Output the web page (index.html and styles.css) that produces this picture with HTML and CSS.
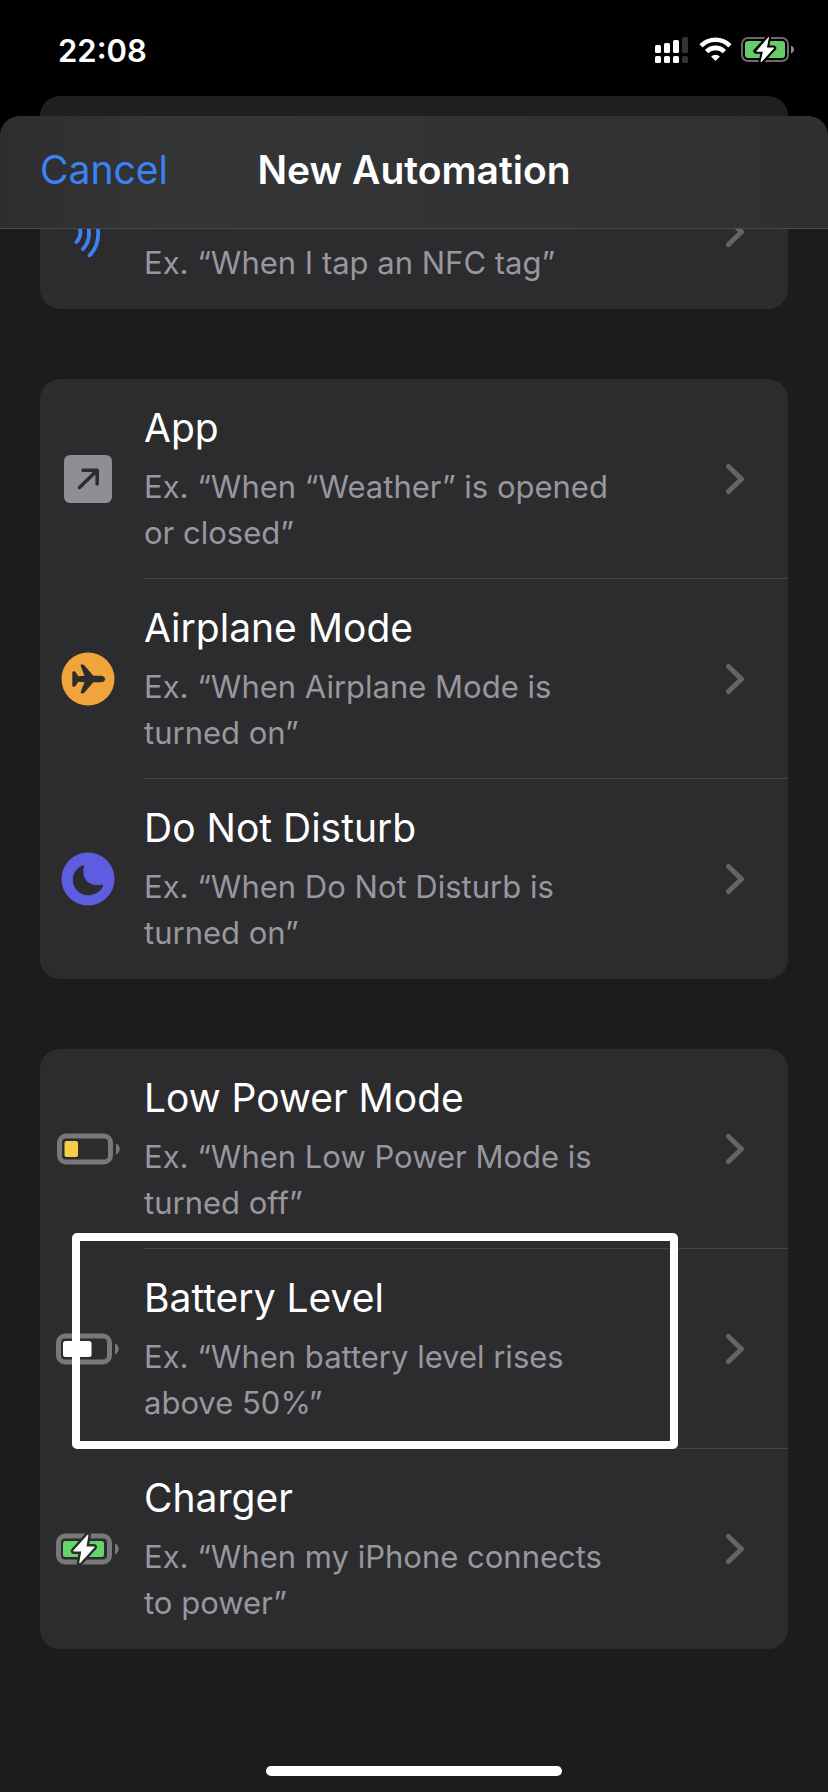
FILE: index.html
```html
<!DOCTYPE html>
<html lang="en">
<head>
  <meta charset="UTF-8" />
  <meta name="viewport" content="width=device-width, initial-scale=1.0"/>
  <title>New Automation</title>
  <link rel="stylesheet" href="styles.css">
</head>
<body>

  <div class="status-bar">
    <span class="time">22:08</span>
    <div class="status-icons">
      <svg width="33" height="28" viewBox="0 0 33 28" fill="#fff">
        <rect x="0" y="9" width="6" height="8" rx="1.5"/>
        <rect x="9" y="7" width="6" height="10" rx="1.5"/>
        <rect x="18" y="4" width="6" height="13" rx="1.5"/>
        <rect x="27" y="1" width="6" height="16" rx="1.5" fill="#333"/>
        <rect x="0" y="20" width="6" height="7" rx="1.5"/>
        <rect x="9" y="20" width="6" height="7" rx="1.5"/>
        <rect x="18" y="20" width="6" height="7" rx="1.5"/>
        <rect x="27" y="20" width="6" height="7" rx="1.5" fill="#333"/>
      </svg>
      <svg width="35" height="28" viewBox="0 0 35 28" fill="none" stroke="#fff" stroke-width="4.6">
        <path d="M4 9.8a20.5 20.5 0 0 1 29 0"/>
        <path d="M9.6 15.6a12.6 12.6 0 0 1 17.8 0"/>
        <path d="M18.5 25l-4.4-4.4a6.3 6.3 0 0 1 8.8 0z" fill="#fff" stroke="none"/>
      </svg>
      <svg width="53" height="28" viewBox="0 0 53 28">
        <rect x="1" y="2" width="46" height="23" rx="6" fill="none" stroke="#6b6b6d" stroke-width="2"/>
        <path d="M50 9.5c4 1.500 4 6.500 0 8z" fill="#8a8a8c"/>
        <rect x="4" y="5" width="40" height="17" rx="3" fill="#67ce67"/>
        <path d="M27.500 1.500L14.800 15.200h7.700L20 26 32.800 12h-7.500z" fill="#fff" stroke="#000" stroke-width="5" stroke-linejoin="round"/>
        <path d="M27.500 1.500L15.800 15.200h6.700L20 26 32.800 12h-7.500z" fill="#fff" stroke="#fff" stroke-width="1" stroke-linejoin="round"/>
      </svg>
    </div>
  </div>

  <div class="back-card"></div>

  <div class="sheet">
    <header class="nav">
      <button type="button" class="cancel">Cancel</button>
      <h1>New Automation</h1>
    </header>

    <main class="content">
      <ul class="group group-scrolled">
        <li>
          <a class="row" href="#">
            <span class="icon">
              <svg width="54" height="30" viewBox="0 0 54 30" fill="none" stroke="#3b82f7" stroke-width="3.8" stroke-linecap="round">
                <path d="M17.500 -4C20.500 2 20 8 15.500 13"/>
                <path d="M26 -6C29.500 4 28.500 13 22 20"/>
                <path d="M35.500 -8C39 6 37 18 28.500 26.500"/>
              </svg>
            </span>
            <span class="body">
              <span class="text"><span class="desc">Ex. “When I tap an NFC tag”</span></span>
              <svg class="chevron" width="18" height="20" viewBox="0 0 18 20"><path d="M2.500 -9.500L15.500 3L2.500 15.500"/></svg>
            </span>
          </a>
        </li>
      </ul>

      <ul class="group">
        <li>
          <a class="row" href="#">
            <span class="icon">
              <svg width="48" height="48" viewBox="0 0 48 48">
                <rect width="48" height="48" rx="6" fill="#8e8e93"/>
                <path d="M15.500 32.500L33 15.500M19 15.200H33.200V29" fill="none" stroke="#2c2c2e" stroke-width="3.600" stroke-linecap="round" stroke-linejoin="round"/>
              </svg>
            </span>
            <span class="body">
              <span class="text">
                <span class="title">App</span>
                <span class="desc">Ex. “When “Weather” is opened or closed”</span>
              </span>
              <svg class="chevron" width="18" height="30" viewBox="0 0 18 30"><path d="M2.500 2.500L15.500 15L2.500 27.500"/></svg>
            </span>
          </a>
        </li>
        <li>
          <a class="row" href="#">
            <span class="icon">
              <svg width="54" height="54" viewBox="0 0 54 54">
                <circle cx="27" cy="27" r="26.500" fill="#f1a33c"/>
                <path d="M44.200 27C44.200 25 42 23.700 39.500 23.700H32.300L23.500 13.600C22.500 12.300 19.200 12 19.700 14L23.500 23.700L17.300 24.200L14.500 20C13.500 18.800 11.300 19 11.300 20.500V33.500C11.300 35 13.500 35.200 14.500 34L17.300 29.800L23.500 30.300L19.700 40C19.200 42 22.500 41.700 23.500 40.400L32.300 30.300H39.500C42 30.300 44.200 29 44.200 27z" fill="#2c2c2e"/>
              </svg>
            </span>
            <span class="body">
              <span class="text">
                <span class="title">Airplane Mode</span>
                <span class="desc">Ex. “When Airplane Mode is turned on”</span>
              </span>
              <svg class="chevron" width="18" height="30" viewBox="0 0 18 30"><path d="M2.500 2.500L15.500 15L2.500 27.500"/></svg>
            </span>
          </a>
        </li>
        <li>
          <a class="row" href="#">
            <span class="icon">
              <svg width="54" height="54" viewBox="0 0 54 54">
                <circle cx="27" cy="27" r="26.500" fill="#5e5ce0"/>
                <path d="M21.500 13.400C22.700 12.900 23.500 13.500 23.100 14.700C19.800 24.500 26.800 35.200 40.300 32.700C41.600 32.500 42.400 33.200 41.900 34.300C39.500 39.700 33.800 43.200 27.300 43.200C18.600 43.200 11.800 36.600 11.800 28C11.800 21.200 15.800 15.600 21.500 13.400z" fill="#2c2c2e"/>
              </svg>
            </span>
            <span class="body">
              <span class="text">
                <span class="title">Do Not Disturb</span>
                <span class="desc">Ex. “When Do Not Disturb is turned on”</span>
              </span>
              <svg class="chevron" width="18" height="30" viewBox="0 0 18 30"><path d="M2.500 2.500L15.500 15L2.500 27.500"/></svg>
            </span>
          </a>
        </li>
      </ul>

      <ul class="group">
        <li>
          <a class="row" href="#">
            <span class="icon">
              <svg width="64" height="32" viewBox="0 0 64 32">
                <rect x="3.500" y="3" width="51" height="26" rx="6.500" fill="none" stroke="#78787b" stroke-width="5"/>
                <path d="M60 10.500c5 2 5 9 0 11z" fill="#78787b"/>
                <rect x="8.500" y="8" width="13.500" height="16" rx="2" fill="#f6cd46"/>
              </svg>
            </span>
            <span class="body">
              <span class="text">
                <span class="title">Low Power Mode</span>
                <span class="desc">Ex. “When Low Power Mode is turned off”</span>
              </span>
              <svg class="chevron" width="18" height="30" viewBox="0 0 18 30"><path d="M2.500 2.500L15.500 15L2.500 27.500"/></svg>
            </span>
          </a>
        </li>
        <li class="highlighted">
          <a class="row" href="#">
            <span class="icon">
              <svg width="64" height="32" viewBox="0 0 64 32">
                <rect x="2.500" y="3" width="51" height="26" rx="6.500" fill="none" stroke="#78787b" stroke-width="5"/>
                <path d="M59 10.500c5 2 5 9 0 11z" fill="#78787b"/>
                <rect x="7" y="8" width="28.500" height="16" rx="2.500" fill="#fff"/>
              </svg>
            </span>
            <span class="body">
              <span class="text">
                <span class="title">Battery Level</span>
                <span class="desc">Ex. “When battery level rises above 50%”</span>
              </span>
              <svg class="chevron" width="18" height="30" viewBox="0 0 18 30"><path d="M2.500 2.500L15.500 15L2.500 27.500"/></svg>
            </span>
          </a>
        </li>
        <li>
          <a class="row" href="#">
            <span class="icon">
              <svg width="64" height="32" viewBox="0 0 64 32">
                <rect x="2.500" y="3" width="51" height="26" rx="6.500" fill="none" stroke="#78787b" stroke-width="5"/>
                <path d="M59 10.500c5 2 5 9 0 11z" fill="#78787b"/>
                <rect x="7" y="8" width="41" height="16" rx="2.500" fill="#65d768"/>
                <path d="M31.800 2.300L17.800 17.900h8.200L23.800 29.700 38 14h-8.200z" fill="#2c2c2e" stroke="#2c2c2e" stroke-width="6" stroke-linejoin="round"/>
                <path d="M31.800 2.300L17.800 17.900h8.200L23.800 29.700 38 14h-8.200z" fill="#fff" stroke="#fff" stroke-width="1.200" stroke-linejoin="round"/>
              </svg>
            </span>
            <span class="body">
              <span class="text">
                <span class="title">Charger</span>
                <span class="desc">Ex. “When my iPhone connects to power”</span>
              </span>
              <svg class="chevron" width="18" height="30" viewBox="0 0 18 30"><path d="M2.500 2.500L15.500 15L2.500 27.500"/></svg>
            </span>
          </a>
        </li>
      </ul>
    </main>

    <div class="home-indicator"></div>
  </div>

</body>
</html>
```
FILE: styles.css
```css
* {
  box-sizing: border-box;
}
body {
  display: flex;
  flex-direction: column;
  min-height: 100vh;
  margin: 0;
  background: #000;
  color: #fff;
  font-family: Inter, "Liberation Sans", sans-serif;
}
ul {
  list-style: none;
  margin: 0;
  padding: 0;
}
svg {
  display: block;
}

/* Status bar */
.status-bar {
  display: flex;
  justify-content: space-between;
  align-items: center;
  height: 96px;
  padding: 4px 34px 0 58px;
}
.time {
  font-size: 31px;
  font-weight: 600;
}
.status-icons {
  display: flex;
  gap: 9px;
}

/* Page behind the sheet */
.back-card {
  height: 20px;
  margin: 0 40px;
  background: #202022;
  border-radius: 20px 20px 0 0;
}

/* Sheet */
.sheet {
  flex: 1;
  display: flex;
  flex-direction: column;
  background: #1c1c1e;
  border-radius: 20px 20px 0 0;
  overflow: hidden;
}
.nav {
  display: grid;
  grid-template-columns: 1fr auto 1fr;
  align-items: center;
  height: 113px;
  padding: 0 40px 6px;
  background: linear-gradient(90deg, #2e2e2f, #343536 20%, #323334 50%, #323233 85%, #2f2f30);
  border-bottom: 1px solid #4a4a4c;
}
.nav h1 {
  margin: 0;
  font-size: 39px;
  font-weight: 600;
}
.cancel {
  justify-self: start;
  padding: 0;
  border: 0;
  background: none;
  color: #3b82f7;
  font: inherit;
  font-size: 39px;
}

/* Trigger list */
.content {
  display: flex;
  flex-direction: column;
  gap: 70px;
  padding: 0 40px;
}
.group {
  background: #2c2c2e;
  border-radius: 20px;
}
.row {
  display: grid;
  grid-template-columns: 96px 1fr;
  column-gap: 8px;
  color: inherit;
  text-decoration: none;
}
.icon {
  display: flex;
  align-items: center;
  justify-content: center;
}
.body {
  display: flex;
  align-items: center;
  justify-content: space-between;
  padding-right: 44px;
  border-bottom: 1px solid #434347;
}
.group li:last-child .body {
  border-color: transparent;
}
.text {
  display: flex;
  flex-direction: column;
  gap: 12px;
  max-width: 480px;
  padding: 25px 0 22px;
}
.title {
  font-size: 39px;
  line-height: 48px;
}
.desc {
  color: #98979f;
  font-size: 31px;
  line-height: 46px;
}
.chevron {
  flex: none;
  fill: none;
  stroke: #656569;
  stroke-width: 5;
  stroke-linecap: round;
  stroke-linejoin: round;
}

/* First group is partly scrolled under the nav bar */
.group-scrolled {
  border-radius: 0 0 20px 20px;
}
.group-scrolled .icon,
.group-scrolled .body {
  align-items: flex-start;
}
.group-scrolled .text {
  padding-top: 11px;
}

/* Marker frame round one row */
.highlighted {
  position: relative;
}
.highlighted::after {
  content: "";
  position: absolute;
  inset: -16px 110px 0 32px;
  border: 8px solid #fff;
  border-radius: 5px;
  pointer-events: none;
}

.home-indicator {
  width: 296px;
  height: 10px;
  margin: auto auto 16px;
  background: #fff;
  border-radius: 5px;
}
```
